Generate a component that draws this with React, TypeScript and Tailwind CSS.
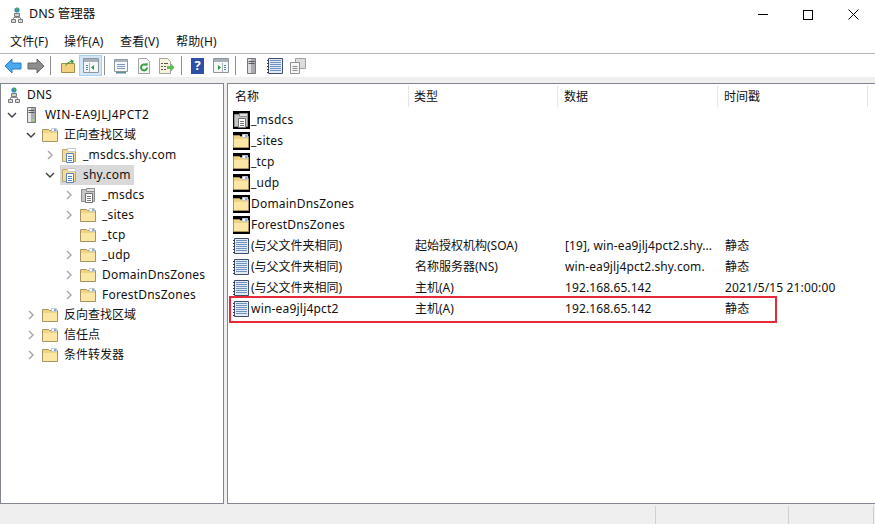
import React from 'react';

const font = 'font-["Noto_Sans","Noto_Sans_CJK_SC",sans-serif]';

// ---- small icons ----
const Folder = () => (
  <svg width="16" height="16" viewBox="0 0 16 16" className="shrink-0">
    <path d="M0.5 2.5h6l1 1h8v11h-15z" fill="#f0d383" stroke="#a8945e" />
    <path d="M1 6h14v8H1z" fill="#fbe6a4" />
    <path d="M9.5 1.5h5v3h-5z" fill="#fff" stroke="#c9c9c9" />
    <path d="M12 2h2v2h-2z" fill="#78aee0" />
  </svg>
);

const ZoneFolder = ({ gray }: { gray?: boolean }) => (
  <svg width="16" height="16" viewBox="0 0 16 16" className="shrink-0">
    <path d="M1.5 2.5h13v12h-13z" fill={gray ? '#c6c6c6' : '#f5dc96'} stroke={gray ? '#8f8f8f' : '#b8a46c'} />
    <path d="M6.5 1.5h8v3h-8z" fill={gray ? '#e2e2e2' : '#fff'} stroke={gray ? '#8f8f8f' : '#c9c9c9'} />
    <path d="M5.5 6.5h7v9h-7z" fill="#fff" stroke={gray ? '#707070' : '#5c82b8'} />
    <path d="M7 9.5h4M7 11.5h4M7 13.5h4" stroke={gray ? '#7a7a7a' : '#4f7fc4'} />
  </svg>
);

const ServerIcon = () => (
  <svg width="16" height="16" viewBox="0 0 16 16" className="shrink-0">
    <path d="M4.5 0.5h8v15h-8z" fill="#a9acb0" stroke="#74767a" />
    <path d="M5 1h3v14H5z" fill="#e6e7e9" />
    <path d="M5.5 3.5h6M5.5 5.5h6" stroke="#55585c" />
    <path d="M9 12h2v2H9z" fill="#9fdc50" />
  </svg>
);

const DnsIcon = () => (
  <svg width="12" height="16" viewBox="0 0 12 16" className="shrink-0">
    <circle cx="6" cy="3" r="2.6" fill="#2f8fc4" />
    <path d="M4.6 2l2-1.4 1 1.8-1.6 1.8z" fill="#4fa84a" />
    <path d="M6 6v2M2.5 11v1.5M9.5 11v1.5M2.5 10.5h7" stroke="#8a8a8a" fill="none" />
    <path d="M3.5 6.5h5v3h-5z" fill="#d2d2d2" stroke="#7a7a7a" />
    <path d="M0.5 12.5h4v3h-4zM7.5 12.5h4v3h-4z" fill="#dadada" stroke="#7a7a7a" />
  </svg>
);

const RecordIcon = () => (
  <svg width="16" height="16" viewBox="0 0 16 16" className="shrink-0">
    <path d="M1.5 0.5h14v15h-14z" fill="#e3eaf4" stroke="#3f4f6d" />
    <path d="M3 2.5h11M3 4.5h11M3 6.5h11M3 8.5h11M3 10.5h11M3 12.5h11" stroke="#6f93c0" />
    <path d="M0 2h2v1H0zM0 5h2v1H0zM0 8h2v1H0zM0 11h2v1H0zM0 14h2v1H0z" fill="#3a3a3a" />
  </svg>
);

// folder icons in the list sit on a black matte, as in the screenshot
const Matte = ({ children }: { children: React.ReactNode }) => (
  <span className="flex h-[18px] w-[17px] shrink-0 items-center bg-black">{children}</span>
);

const Chevron = ({ open }: { open?: boolean }) => (
  <svg width="10" height="10" viewBox="0 0 10 10" className="shrink-0">
    {open ? (
      <path d="M1 3l4 4 4-4" fill="none" stroke="#404040" strokeWidth="1.4" />
    ) : (
      <path d="M3 1l4 4-4 4" fill="none" stroke="#a6a6a6" strokeWidth="1.4" />
    )}
  </svg>
);

// ---- toolbar icons ----
const Arrow = ({ flip, color, edge }: { flip?: boolean; color: string; edge: string }) => (
  <svg width="18" height="16" viewBox="0 0 18 16" className={flip ? '-scale-x-100' : ''}>
    <path d="M1 8l7-7v4h9v6H8v4z" fill={color} stroke={edge} strokeLinejoin="round" />
  </svg>
);

const Win = ({ side }: { side: 'left' | 'right' }) => (
  <svg width="16" height="15" viewBox="0 0 16 15">
    <path d="M0.5 0.5h15v14h-15z" fill="#f4f6f8" stroke="#8d959d" />
    <path d="M1 1h14v3H1z" fill="#a7afb7" />
    <path d={side === 'left' ? 'M11 7v5L8 9.5z' : 'M5 7v5l3-2.5z'} fill="#2e9b3a" />
    <path d={side === 'left' ? 'M3 7h2v1H3zM3 9h2v1H3zM3 11h2v1H3z' : 'M11 7h2v1h-2zM11 9h2v1h-2zM11 11h2v1h-2z'} fill="#5a7fb5" />
    <path d={side === 'left' ? 'M6.5 5v9' : 'M9.5 5v9'} stroke="#aab2ba" />
  </svg>
);

const Sep = ({ className }: { className: string }) => (
  <span className={`h-[19px] w-px bg-[#8f8f8f] ${className}`} />
);

const Tool = ({ children, active }: { children: React.ReactNode; active?: boolean }) => (
  <span
    className={`flex h-[21px] w-[23px] items-center justify-center ${
      active ? 'border border-[#a5d0f2] bg-[#d3e7f8]' : ''
    }`}
  >
    {children}
  </span>
);

// ---- data ----
type TreeRow = {
  depth: number;
  chevron?: 'open' | 'closed';
  icon: React.ReactNode;
  label: string;
  selected?: boolean;
};

const tree: TreeRow[] = [
  { depth: 0, icon: <DnsIcon />, label: 'DNS' },
  { depth: 1, chevron: 'open', icon: <ServerIcon />, label: 'WIN-EA9JLJ4PCT2' },
  { depth: 2, chevron: 'open', icon: <Folder />, label: '正向查找区域' },
  { depth: 3, chevron: 'closed', icon: <ZoneFolder />, label: '_msdcs.shy.com' },
  { depth: 3, chevron: 'open', icon: <ZoneFolder />, label: 'shy.com', selected: true },
  { depth: 4, chevron: 'closed', icon: <ZoneFolder gray />, label: '_msdcs' },
  { depth: 4, chevron: 'closed', icon: <Folder />, label: '_sites' },
  { depth: 4, icon: <Folder />, label: '_tcp' },
  { depth: 4, chevron: 'closed', icon: <Folder />, label: '_udp' },
  { depth: 4, chevron: 'closed', icon: <Folder />, label: 'DomainDnsZones' },
  { depth: 4, chevron: 'closed', icon: <Folder />, label: 'ForestDnsZones' },
  { depth: 2, chevron: 'closed', icon: <Folder />, label: '反向查找区域' },
  { depth: 2, chevron: 'closed', icon: <Folder />, label: '信任点' },
  { depth: 2, chevron: 'closed', icon: <Folder />, label: '条件转发器' },
];

const indent = ['w-[7px]', 'w-[6px]', 'w-[25px]', 'w-[44px]', 'w-[63px]'];

const isLatin = (s: string) => /^[\x00-\x7f]+$/.test(s);
const trackOf = (s: string) =>
  s === 'WIN-EA9JLJ4PCT2' ? 'tracking-[0.45px]' : isLatin(s) ? 'tracking-[0.2px]' : '';

const rows = [
  { icon: <ZoneFolder gray />, name: '_msdcs', type: '', data: '', time: '' },
  { icon: <Folder />, name: '_sites', type: '', data: '', time: '' },
  { icon: <Folder />, name: '_tcp', type: '', data: '', time: '' },
  { icon: <Folder />, name: '_udp', type: '', data: '', time: '' },
  { icon: <Folder />, name: 'DomainDnsZones', type: '', data: '', time: '' },
  { icon: <Folder />, name: 'ForestDnsZones', type: '', data: '', time: '' },
  { icon: <RecordIcon />, name: '(与父文件夹相同)', type: '起始授权机构(SOA)', data: '[19], win-ea9jlj4pct2.shy...', time: '静态' },
  { icon: <RecordIcon />, name: '(与父文件夹相同)', type: '名称服务器(NS)', data: 'win-ea9jlj4pct2.shy.com.', time: '静态' },
  { icon: <RecordIcon />, name: '(与父文件夹相同)', type: '主机(A)', data: '192.168.65.142', time: '2021/5/15 21:00:00' },
  { icon: <RecordIcon />, name: 'win-ea9jlj4pct2', type: '主机(A)', data: '192.168.65.142', time: '静态' },
];

export default function App() {
  return (
    <div className={`${font} flex h-[524px] w-[875px] flex-col overflow-hidden bg-white text-[12px] text-[#111]`}>
      {/* Title bar */}
      <div className="flex h-[29px] items-center pl-[11px]">
        <DnsIcon />
        <span className="ml-[6px] text-[12.5px]">DNS 管理器</span>
        <div className="ml-auto flex items-center pr-[16px]">
          <span className="h-px w-[10px] bg-black" />
          <span className="ml-[35px] h-[10px] w-[10px] border border-black" />
          <svg width="11" height="11" viewBox="0 0 11 11" className="ml-[35px]">
            <path d="M0.5 0.5l10 10M10.5 0.5l-10 10" stroke="#000" />
          </svg>
        </div>
      </div>

      {/* Menu bar */}
      <div className="flex h-[25px] items-center border-b border-[#b4b4c0] pt-[2px] pl-[10px] tracking-[0.15px]">
        <span className="w-[54px]">文件(F)</span>
        <span className="w-[56px]">操作(A)</span>
        <span className="w-[56px]">查看(V)</span>
        <span>帮助(H)</span>
      </div>

      {/* Toolbar */}
      <div className="flex h-[23px] items-center pl-[4px]">
        <Arrow color="#4aa8ef" edge="#2a7cc4" />
        <span className="w-[5px]" />
        <Arrow flip color="#8d8d8d" edge="#666" />
        <Sep className="mr-[5px] ml-[5px]" />
        <Tool>
          <svg width="16" height="16" viewBox="0 0 16 16">
            <path d="M1.5 5.5h13v9h-13z" fill="#f3d27e" stroke="#a98c45" />
            <path d="M5 9c1-4 3-5 6-6l-1-2 4 2-2 3-1-2c-2 1-4 2-6 5z" fill="#2e9b3a" />
          </svg>
        </Tool>
        <Tool active>
          <Win side="left" />
        </Tool>
        <Sep className="mr-[4px] ml-[2px]" />
        <Tool>
          <svg width="16" height="16" viewBox="0 0 16 16">
            <path d="M1.5 1.5h13v12h-13z" fill="#f5f6f8" stroke="#9098a0" />
            <path d="M2 2h12v2H2z" fill="#aeb5bc" />
            <path d="M4 6.5h8M4 8.5h8M4 10.5h8" stroke="#7c98bf" />
            <path d="M3 14h10v1.5H3z" fill="#5f8d9c" />
          </svg>
        </Tool>
        <Tool>
          <svg width="14" height="16" viewBox="0 0 14 16">
            <path d="M1.5 0.5h8l3 3v12h-11z" fill="#f7f7f7" stroke="#a5a5a5" />
            <path d="M10 9.5a3 3 0 1 1-1-2.3" fill="none" stroke="#3aa346" strokeWidth="2" />
            <path d="M8 5l3 .5-1 3z" fill="#3aa346" />
          </svg>
        </Tool>
        <Tool>
          <svg width="17" height="16" viewBox="0 0 17 16">
            <path d="M1.5 0.5h8l3 3v12h-11z" fill="#f8f3dd" stroke="#a5a5a5" />
            <path d="M3 5.5h2M6 5.5h4M3 8.5h2M6 8.5h2M3 11.5h2M6 11.5h2" stroke="#555" />
            <path d="M9 8h4V5.5l3.5 4-3.5 4V11H9z" fill="#5cc04f" />
          </svg>
        </Tool>
        <Sep className="mr-[4px] ml-[3px]" />
        <Tool>
          <span className="flex h-[16px] w-[13px] items-center justify-center bg-[#2f4fa8] text-[13px] leading-none font-bold text-white">?</span>
        </Tool>
        <Tool>
          <Win side="right" />
        </Tool>
        <Sep className="mr-[4px] ml-[3px]" />
        <Tool>
          <svg width="9" height="16" viewBox="0 0 9 16">
            <path d="M0.5 0.5h8v15h-8z" fill="#a9abae" stroke="#77797c" />
            <path d="M1 1h3v14H1z" fill="#dcdde0" />
            <path d="M1.5 3.5h6M1.5 5.5h6" stroke="#55585c" />
          </svg>
        </Tool>
        <Tool>
          <RecordIcon />
        </Tool>
        <Tool>
          <svg width="16" height="16" viewBox="0 0 16 16">
            <path d="M5.5 0.5h10v10h-10z" fill="#dcdcdc" stroke="#a0a0a0" />
            <path d="M0.5 4.5h9v11h-9z" fill="#f6f6f6" stroke="#909090" />
            <path d="M2.5 8.5h5M2.5 10.5h5M2.5 12.5h5" stroke="#8a8a8a" />
          </svg>
        </Tool>
      </div>

      {/* Panes */}
      <div className="flex flex-1 gap-[3px] bg-[#efefef] pt-[6px]">
        <div className="w-[224px] border border-[#82878f] bg-white pt-px">
          {tree.map((row) => (
            <div key={row.label + row.depth} className="flex h-[20px] items-center">
              <span className={`${indent[row.depth]} shrink-0`} />
              {row.chevron ? (
                <Chevron open={row.chevron === 'open'} />
              ) : (
                row.depth > 0 && <span className="w-[10px] shrink-0" />
              )}
              <span
                className={`flex h-[20px] items-center ${row.depth > 0 ? 'ml-[5px] pl-px' : ''} ${
                  row.selected ? 'bg-[#d9d9d9]' : ''
                }`}
              >
                {row.icon}
                <span className={`${row.depth > 0 ? 'ml-[3px]' : 'ml-[4px]'} px-[3px] whitespace-nowrap ${trackOf(row.label)}`}>
                  {row.label}
                </span>
              </span>
            </div>
          ))}
        </div>

        <div className="relative flex-1 border-y border-l border-[#82878f] bg-white">
          <div className="flex h-[25px] items-center">
            <span className="w-[181px] border-r border-[#e5e5e5] pl-[7px] leading-[21px]">名称</span>
            <span className="w-[149px] border-r border-[#e5e5e5] pl-[5px] leading-[21px]">类型</span>
            <span className="w-[160px] border-r border-[#e5e5e5] pl-[6px] leading-[21px]">数据</span>
            <span className="w-[150px] border-r border-[#e5e5e5] pl-[6px] leading-[21px]">时间戳</span>
          </div>
          {rows.map((row, i) => (
            <div key={i} className="flex h-[21px] items-center">
              <span className="flex w-[187px] items-center pl-[5px]">
                {row.type ? <span className="flex w-[17px] shrink-0">{row.icon}</span> : <Matte>{row.icon}</Matte>}
                <span className={`ml-px whitespace-nowrap ${trackOf(row.name)}`}>{row.name}</span>
              </span>
              <span className="w-[150px] whitespace-nowrap">{row.type}</span>
              <span className="w-[160px] tracking-[0.1px] whitespace-nowrap">{row.data}</span>
              <span className="tracking-[0.15px] whitespace-nowrap">{row.time}</span>
            </div>
          ))}
          {/* Red annotation box */}
          <div className="absolute top-[212px] left-[1px] h-[27px] w-[548px] border-2 border-[#e8293a]" />
        </div>
      </div>

      {/* Status bar */}
      <div className="flex h-[20px] bg-[#efefef] pt-[2px]">
        <span className="w-[656px] border-r border-[#d0d0d0]" />
        <span className="w-[133px] border-r border-[#d0d0d0]" />
        <span className="w-[85px] border-r border-[#d0d0d0]" />
      </div>
    </div>
  );
}
